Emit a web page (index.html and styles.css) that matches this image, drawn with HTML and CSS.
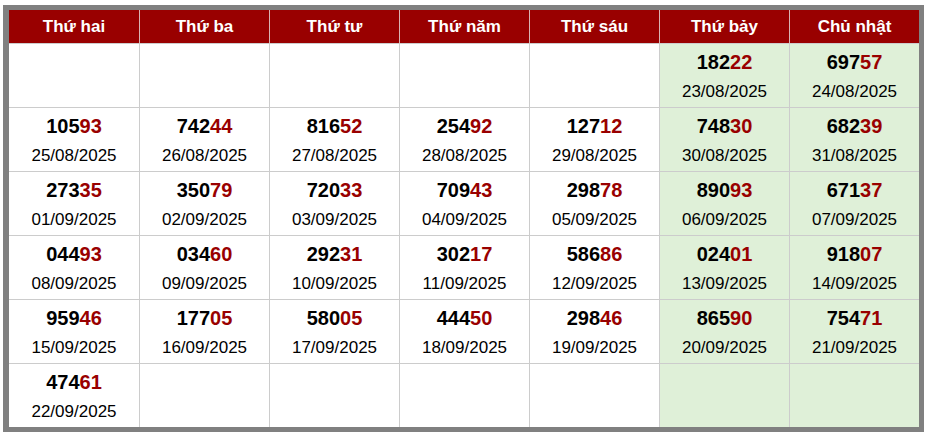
FILE: index.html
```html
<!DOCTYPE html>
<html lang="vi">
<head>
<meta charset="utf-8">
<link rel="stylesheet" href="styles.css">
</head>
<body>
<div class="frame">
  <div class="cal">
    <div class="hd">Thứ hai</div>
    <div class="hd">Thứ ba</div>
    <div class="hd">Thứ tư</div>
    <div class="hd">Thứ năm</div>
    <div class="hd">Thứ sáu</div>
    <div class="hd">Thứ bảy</div>
    <div class="hd">Chủ nhật</div>

    <div class="c"></div>
    <div class="c"></div>
    <div class="c"></div>
    <div class="c"></div>
    <div class="c"></div>
    <div class="c we"><div class="n">182<span>22</span></div><div class="d">23/08/2025</div></div>
    <div class="c we"><div class="n">697<span>57</span></div><div class="d">24/08/2025</div></div>

    <div class="c"><div class="n">105<span>93</span></div><div class="d">25/08/2025</div></div>
    <div class="c"><div class="n">742<span>44</span></div><div class="d">26/08/2025</div></div>
    <div class="c"><div class="n">816<span>52</span></div><div class="d">27/08/2025</div></div>
    <div class="c"><div class="n">254<span>92</span></div><div class="d">28/08/2025</div></div>
    <div class="c"><div class="n">127<span>12</span></div><div class="d">29/08/2025</div></div>
    <div class="c we"><div class="n">748<span>30</span></div><div class="d">30/08/2025</div></div>
    <div class="c we"><div class="n">682<span>39</span></div><div class="d">31/08/2025</div></div>

    <div class="c"><div class="n">273<span>35</span></div><div class="d">01/09/2025</div></div>
    <div class="c"><div class="n">350<span>79</span></div><div class="d">02/09/2025</div></div>
    <div class="c"><div class="n">720<span>33</span></div><div class="d">03/09/2025</div></div>
    <div class="c"><div class="n">709<span>43</span></div><div class="d">04/09/2025</div></div>
    <div class="c"><div class="n">298<span>78</span></div><div class="d">05/09/2025</div></div>
    <div class="c we"><div class="n">890<span>93</span></div><div class="d">06/09/2025</div></div>
    <div class="c we"><div class="n">671<span>37</span></div><div class="d">07/09/2025</div></div>

    <div class="c"><div class="n">044<span>93</span></div><div class="d">08/09/2025</div></div>
    <div class="c"><div class="n">034<span>60</span></div><div class="d">09/09/2025</div></div>
    <div class="c"><div class="n">292<span>31</span></div><div class="d">10/09/2025</div></div>
    <div class="c"><div class="n">302<span>17</span></div><div class="d">11/09/2025</div></div>
    <div class="c"><div class="n">586<span>86</span></div><div class="d">12/09/2025</div></div>
    <div class="c we"><div class="n">024<span>01</span></div><div class="d">13/09/2025</div></div>
    <div class="c we"><div class="n">918<span>07</span></div><div class="d">14/09/2025</div></div>

    <div class="c"><div class="n">959<span>46</span></div><div class="d">15/09/2025</div></div>
    <div class="c"><div class="n">177<span>05</span></div><div class="d">16/09/2025</div></div>
    <div class="c"><div class="n">580<span>05</span></div><div class="d">17/09/2025</div></div>
    <div class="c"><div class="n">444<span>50</span></div><div class="d">18/09/2025</div></div>
    <div class="c"><div class="n">298<span>46</span></div><div class="d">19/09/2025</div></div>
    <div class="c we"><div class="n">865<span>90</span></div><div class="d">20/09/2025</div></div>
    <div class="c we"><div class="n">754<span>71</span></div><div class="d">21/09/2025</div></div>

    <div class="c last"><div class="n">474<span>61</span></div><div class="d">22/09/2025</div></div>
    <div class="c last"></div>
    <div class="c last"></div>
    <div class="c last"></div>
    <div class="c last"></div>
    <div class="c last we"></div>
    <div class="c last we"></div>
  </div>
</div>
</body>
</html>
```

FILE: styles.css
```css
html, body {
  margin: 0;
  padding: 0;
  background: #ffffff;
}
body {
  font-family: "Liberation Sans", Arial, sans-serif;
  color: #000;
}
.frame {
  margin: 5px 0 0 3px;
  width: 910px;
  border: 5px solid #808080;
  border-left-width: 6px;
}
.cal {
  display: grid;
  grid-template-columns: repeat(7, 130px);
}
.hd {
  box-sizing: border-box;
  height: 34px;
  background: #990000;
  color: #fff;
  font-weight: bold;
  font-size: 17px;
  display: flex;
  align-items: center;
  justify-content: center;
  border-left: 1px solid #d9b3b3;
  border-bottom: 1px solid #cccccc;
}
.hd:first-child {
  border-left: none;
}
.c {
  box-sizing: border-box;
  height: 64px;
  padding-top: 4px;
  border-left: 1px solid #cccccc;
  border-bottom: 1px solid #cccccc;
  display: flex;
  flex-direction: column;
  align-items: center;
  justify-content: flex-start;
  background: #ffffff;
}
.c:nth-child(7n+1) {
  border-left: none;
}
.c.last {
  height: 63px;
  border-bottom: none;
}
.c.we {
  background: #dff0d8;
}
.n {
  font-weight: bold;
  font-size: 20px;
  line-height: 28px;
}
.n span {
  color: #990000;
}
.d {
  margin-top: 1px;
  font-size: 17px;
  line-height: 29px;
}
```
